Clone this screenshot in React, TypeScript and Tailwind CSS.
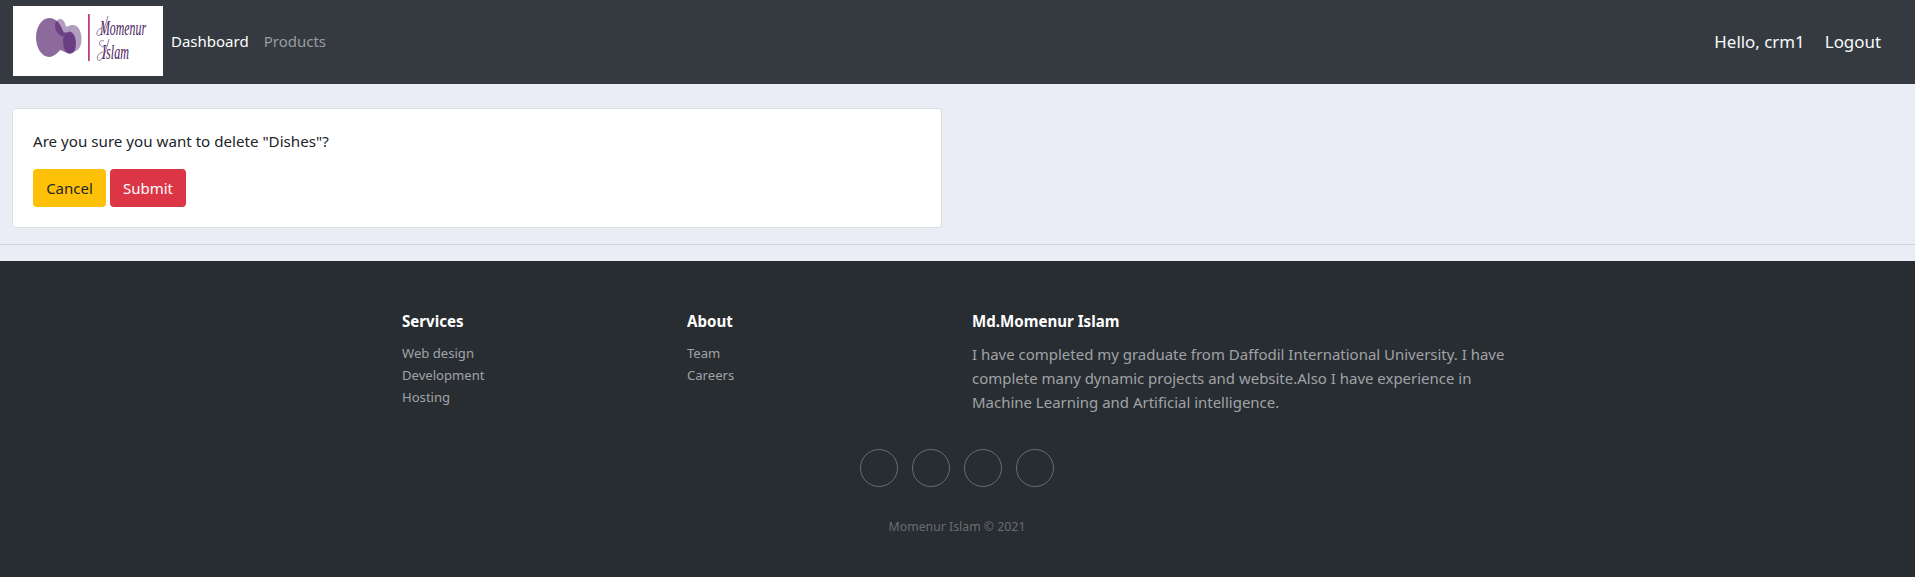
const services = ["Web design", "Development", "Hosting"];
const about = ["Team", "Careers"];

function Logo() {
  return (
    <svg viewBox="0 0 150 70" className="block h-[70px] w-[150px] bg-white" aria-label="Momenur Islam">
      <path
        d="M36 12C43 12 47 17 49.500 24C51 28 55 26 58 27C63 30 64 42 61 46C57 50 52 46 48 44C45 45 42 51 36 51C29 51 23 42 23 31.500C23 21 29 12 36 12Z"
        fill="#8c6a9b"
      />
      <path
        d="M47.500 13C50.500 13 52 17 53 20.500C56 20.500 56 19 60 19C65 19 68.500 25 68.500 33C68.500 41 65 46 59 46C53 46 50 40 50 33C50 30 48 30 46 28C41 25 41 13 47.500 13Z"
        fill="#66397f"
        fillOpacity=".5"
      />
      <path
        d="M43.500 15C46.500 17.500 48.500 21 49.500 24.500C50 27 51 27 52 27.500L50.500 30C47 30 42 26 42 20C42 18 42.500 16 43.500 15Z"
        fill="#66397f"
        fillOpacity=".7"
      />
      <ellipse cx="56.500" cy="36.500" rx="6.400" ry="11" fill="#66397f" fillOpacity=".85" />
      <rect x="75" y="8" width="1.800" height="47" fill="#c23f84" />
      <g fill="none" stroke="#4c2263" strokeWidth=".6">
        <path d="M90 22C85 22 82 28 85 29.500C88 30 91 25 95 10" />
        <path d="M91 35C85 33 85 41 91 41M90 46C84 47 83 54 86 54.500C90 54 93 45 96 33" />
      </g>
      <g fill="#4c2263" fontStyle="italic" fontFamily="'Liberation Serif', serif">
        <text x="87" y="28.500" fontSize="21" textLength="46" lengthAdjust="spacingAndGlyphs">
          Momenur
        </text>
        <text x="89" y="52.500" fontSize="21" textLength="27" lengthAdjust="spacingAndGlyphs">
          Islam
        </text>
      </g>
    </svg>
  );
}

function LinkColumn({ title, items }: { title: string; items: string[] }) {
  return (
    <div className="w-[285px] px-[15px]">
      <h3 className="mb-[11px] text-[15.1px] leading-[19px] font-bold text-white">{title}</h3>
      <ul className="text-[13.1px] leading-[22px] text-[#a0a3a6]">
        {items.map((item) => (
          <li key={item}>
            <a href="#">{item}</a>
          </li>
        ))}
      </ul>
    </div>
  );
}

export default function App() {
  return (
    <div className="flex h-[577px] flex-col overflow-hidden bg-[#eaedf5] font-['Noto_Sans',sans-serif] text-[15px] leading-6 text-[#212529]">
      <nav className="flex h-[84px] shrink-0 items-center bg-[#343a40] pl-[13px] pr-[34px]">
        <div className="mb-[2px]">
          <Logo />
        </div>
        <div className="mb-[2px] flex gap-[15px] pl-[8px]">
          <a href="#" className="text-white">Dashboard</a>
          <a href="#" className="text-[#999c9f]">Products</a>
        </div>
        <div className="ml-auto flex gap-5 text-[16.9px] text-[#f8f9fa]">
          <span>Hello, crm1</span>
          <a href="#">Logout</a>
        </div>
      </nav>

      <main className="h-[177px] shrink-0 pt-6">
        <section className="ml-3 h-[120px] w-[930px] rounded border border-[#dfdfdf] bg-white px-5 pt-5">
          <p className="text-[15.15px]">Are you sure you want to delete "Dishes"?</p>
          <div className="mt-4 flex gap-1">
            <button className="h-[38px] w-[73px] rounded bg-[#ffc107]">Cancel</button>
            <button className="h-[38px] w-[76px] rounded bg-[#dc3545] text-white">Submit</button>
          </div>
        </section>
        <hr className="mt-4 border-t border-[#d2d5dd]" />
      </main>

      <footer className="flex flex-1 flex-col items-center bg-[#282d32] pr-px pt-[51px]">
        <div className="flex h-[137px] w-[1140px]">
          <LinkColumn title="Services" items={services} />
          <LinkColumn title="About" items={about} />
          <div className="w-[570px] px-[15px]">
            <h3 className="mb-[11px] text-[15.1px] leading-[19px] font-bold text-white">Md.Momenur Islam</h3>
            <p className="text-[14.97px] text-[#a0a3a6]">
              I have completed my graduate from Daffodil International University. I have
              <br />
              complete many dynamic projects and website.Also I have experience in
              <br />
              Machine Learning and Artificial intelligence.
            </p>
          </div>
        </div>
        <div className="flex gap-[14px]">
          {[0, 1, 2, 3].map((n) => (
            <a key={n} href="#" className="size-[38px] rounded-full border border-[#686c6f]" />
          ))}
        </div>
        <p className="mt-[28px] text-[12.3px] text-[#686c6f]">Momenur Islam © 2021</p>
      </footer>
    </div>
  );
}
